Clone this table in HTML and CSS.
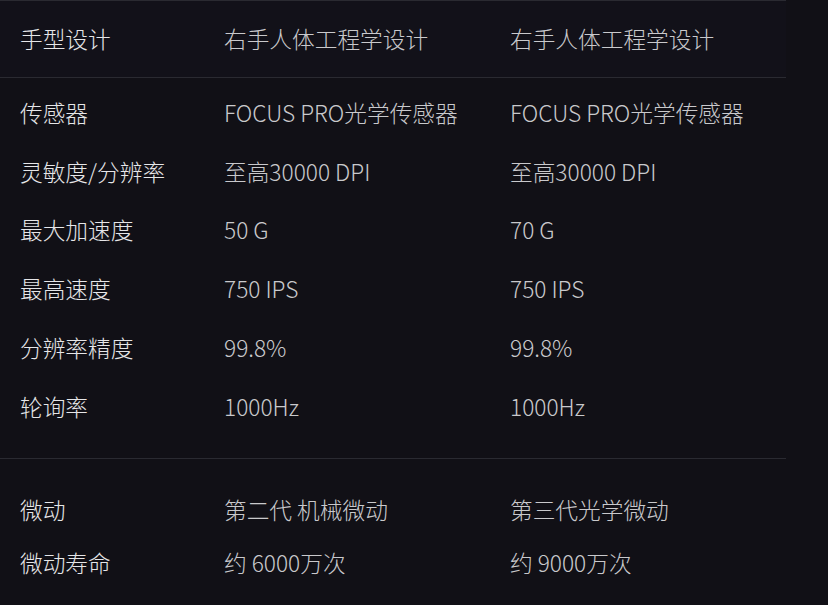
FILE: index.html
```html
<!DOCTYPE html>
<html lang="zh-CN">
<head>
<meta charset="utf-8">
<link rel="stylesheet" href="styles.css">
</head>
<body>
<div class="specs">
  <div class="group head">
    <div class="row"><div class="label">手型设计</div><div class="val">右手人体工程学设计</div><div class="val">右手人体工程学设计</div></div>
  </div>
  <div class="group main">
    <div class="row"><div class="label">传感器</div><div class="val">FOCUS PRO光学传感器</div><div class="val">FOCUS PRO光学传感器</div></div>
    <div class="row"><div class="label">灵敏度/分辨率</div><div class="val">至高30000 DPI</div><div class="val">至高30000 DPI</div></div>
    <div class="row"><div class="label">最大加速度</div><div class="val">50 G</div><div class="val">70 G</div></div>
    <div class="row"><div class="label">最高速度</div><div class="val">750 IPS</div><div class="val">750 IPS</div></div>
    <div class="row"><div class="label">分辨率精度</div><div class="val">99.8%</div><div class="val">99.8%</div></div>
    <div class="row"><div class="label">轮询率</div><div class="val">1000Hz</div><div class="val">1000Hz</div></div>
  </div>
  <div class="group switch">
    <div class="row"><div class="label">微动</div><div class="val">第二代 机械微动</div><div class="val">第三代光学微动</div></div>
    <div class="row"><div class="label">微动寿命</div><div class="val">约 6000万次</div><div class="val">约 9000万次</div></div>
  </div>
</div>
</body>
</html>
```
FILE: styles.css
```css
html, body {
  margin: 0;
  padding: 0;
  background: #111016;
}
body {
  width: 828px;
  height: 605px;
  overflow: hidden;
  font-family: "Noto Sans CJK SC", "Noto Sans", sans-serif;
  font-size: 22.7px;
  font-weight: 300;
}
.specs {
  width: 786px;
}
.group {
  border-top: 1px solid #2a2a31;
}
.head {
  height: 76px;
  display: flex;
  align-items: center;
  background: #121119;
}
.head .row {
  width: 100%;
  margin-top: -2px;
}
.main {
  padding: 5px 0 22px;
}
.main .row {
  height: 58.8px;
}
.switch {
  padding-top: 24px;
}
.switch .row {
  height: 53px;
}
.row {
  display: grid;
  grid-template-columns: 204px 286px 1fr;
  align-items: center;
  padding-left: 20px;
  white-space: nowrap;
}
.label {
  color: #e6e6e8;
}
.val {
  color: #c9c9cc;
}
```
